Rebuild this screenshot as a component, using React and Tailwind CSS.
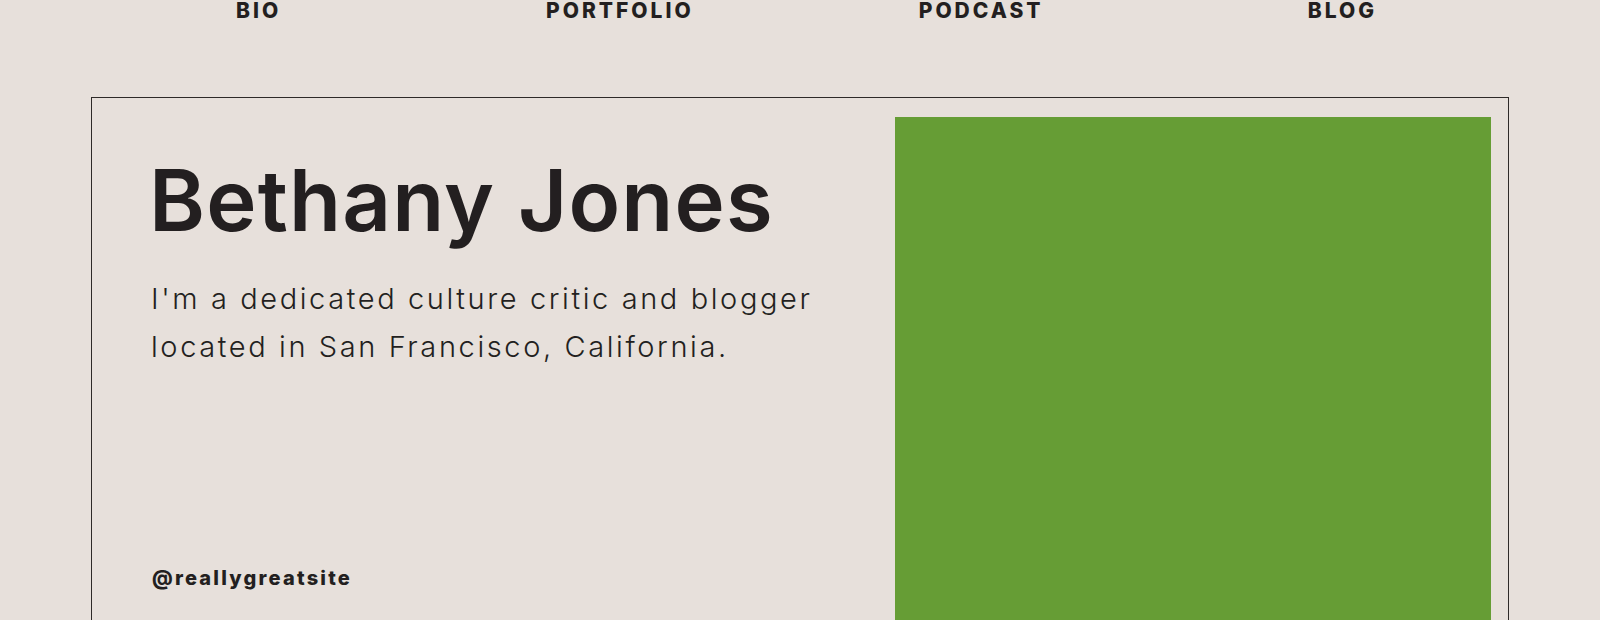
export default function App() {
  const nav = ["BIO", "PORTFOLIO", "PODCAST", "BLOG"];
  return (
    <div className="w-[1600px] h-[620px] overflow-hidden bg-[#e7e0db] text-[#231f20] font-['Inter',sans-serif]">
      <nav className="ml-[78px] w-[1445px] grid grid-cols-4 text-center">
        {nav.map((n) => (
          <div key={n} className="text-[21px] leading-[22px] font-extrabold tracking-[3px]">
            {n}
          </div>
        ))}
      </nav>
      <div className="mt-[75px] ml-[91px] w-[1418px] h-[560px] border-[1.5px] border-[#2e2a28] flex">
        <div className="flex-1 pl-[57px] pt-[60px] flex flex-col">
          <h1 className="text-[85px] leading-[85px] font-semibold tracking-[1.2px]">Bethany Jones</h1>
          <p className="mt-[32px] pl-[2px] text-[29px] leading-[48px] font-light tracking-[2.6px]">
            I'm a dedicated culture critic and blogger
            <br />
            located in San Francisco, California.
          </p>
          <div className="mt-[195px] pl-[3px] text-[20px] leading-[24px] font-extrabold tracking-[2.2px]">@reallygreatsite</div>
        </div>
        <div className="w-[596px] mt-[19px] mr-[17px] bg-[#669d35]" />
      </div>
    </div>
  );
}
